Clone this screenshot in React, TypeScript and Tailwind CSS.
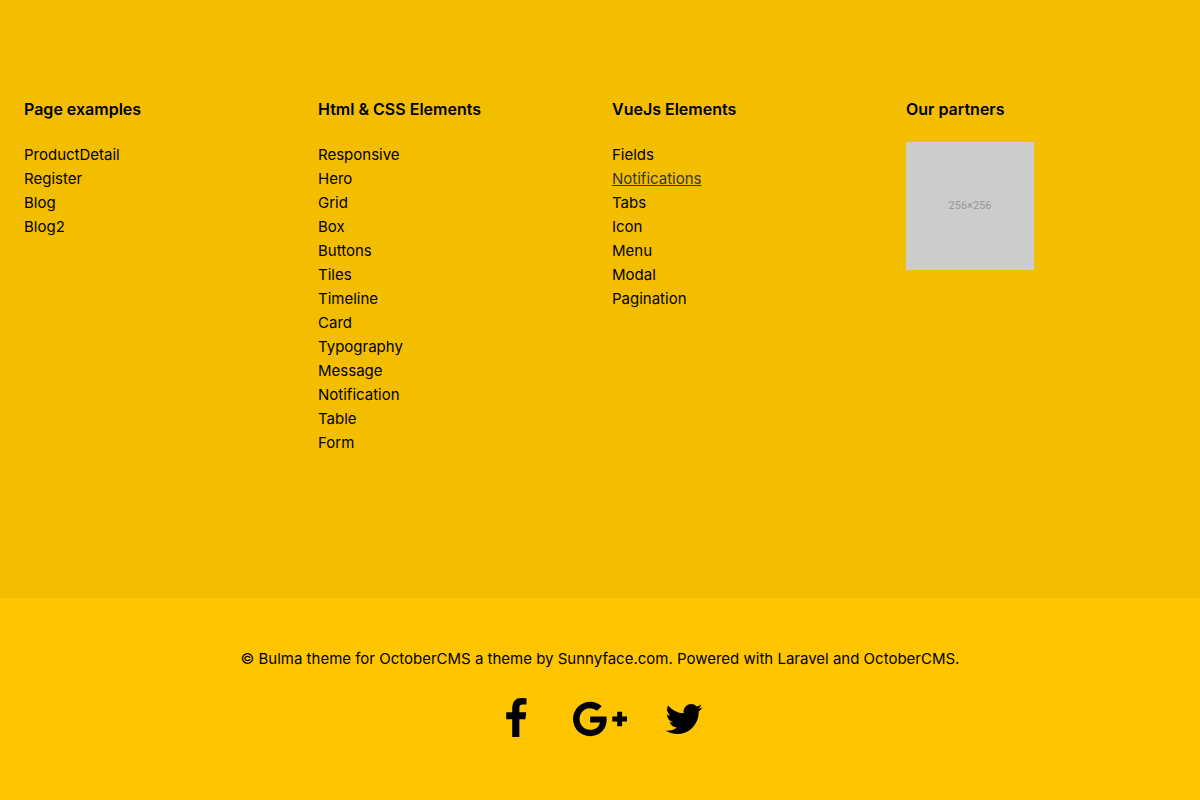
const columns = [
  { title: "Page examples", links: ["ProductDetail", "Register", "Blog", "Blog2"] },
  {
    title: "Html & CSS Elements",
    links: ["Responsive", "Hero", "Grid", "Box", "Buttons", "Tiles", "Timeline", "Card", "Typography", "Message", "Notification", "Table", "Form"],
  },
  { title: "VueJs Elements", links: ["Fields", "Notifications", "Tabs", "Icon", "Menu", "Modal", "Pagination"] },
];

const current = "Notifications";

const socials = [
  {
    name: "Facebook",
    viewBox: "0 0 1792 1792",
    d: "M1343 12v264h-157q-86 0-116 36t-30 108v189h293l-39 296h-254v759h-306v-759h-255v-296h255v-218q0-186 104-288.5t277-102.5q147 0 228 12z",
  },
  {
    name: "Google Plus",
    viewBox: "0 0 2304 1792",
    d: "M1437 913q0 208-87 370.5t-248 254-369 91.5q-149 0-285-58t-234-156-156-234-58-285 58-285 156-234 234-156 285-58q286 0 491 192l-199 191q-117-113-292-113-123 0-227.5 62t-165.5 168.5-61 232.5 61 232.5 165.5 168.5 227.5 62q83 0 152.5-23t114.5-57.5 78.5-78.5 49-83 21.5-74h-416v-252h692q12 63 12 122zm867-122v210h-209v209h-210v-209h-209v-210h209v-209h210v209h209z",
  },
  {
    name: "Twitter",
    viewBox: "0 0 1792 1792",
    d: "M1684 408q-67 98-162 167 1 14 1 42 0 130-38 259.5t-115.5 248.5-184.5 210.5-258 146-323 54.5q-271 0-496-145 35 4 78 4 225 0 401-138-105-2-188-64.5t-114-159.5q33 5 61 5 43 0 85-11-112-23-185.5-111.5t-73.5-205.5v-4q68 38 146 41-66-44-105-115t-39-154q0-88 44-163 121 149 294.5 238.5t371.5 99.5q-8-38-8-74 0-134 94.5-228.5t228.5-94.5q140 0 236 102 109-21 205-78-37 115-142 178 93-10 186-50z",
  },
];

function Heading({ children }: { children: string }) {
  return <h2 className="mb-[21px] text-base leading-6 font-semibold">{children}</h2>;
}

export default function App() {
  return (
    <div className="min-h-screen bg-[#ffc600] font-['Inter',sans-serif] text-[15px] leading-6 text-black">
      <section className="bg-[#f4be00] px-6 pt-[97px] pb-[143px]">
        <div className="grid grid-cols-4 gap-x-6">
          {columns.map((column) => (
            <nav key={column.title} aria-label={column.title}>
              <Heading>{column.title}</Heading>
              <ul className="pt-px">
                {column.links.map((link) => (
                  <li key={link}>
                    <a href="#" className={link === current ? "text-[#363636] underline" : "hover:underline"}>
                      {link}
                    </a>
                  </li>
                ))}
              </ul>
            </nav>
          ))}
          <div>
            <Heading>Our partners</Heading>
            <div className="flex size-32 items-center justify-center bg-[#cccccc] font-['Roboto',sans-serif] text-[11px] text-[#969696]">
              256×256
            </div>
          </div>
        </div>
      </section>
      <footer className="flex flex-col items-center px-6 pt-[49px] pb-12">
        <p className="text-center">
          © Bulma theme for OctoberCMS a theme by Sunnyface.com. Powered with Laravel and OctoberCMS.
        </p>
        <div className="mt-[27px] flex items-center gap-9">
          {socials.map((social) => (
            <a key={social.name} href="#" aria-label={social.name}>
              <svg viewBox={social.viewBox} className="h-[42px] w-auto" fill="currentColor" aria-hidden="true">
                <path d={social.d} />
              </svg>
            </a>
          ))}
        </div>
      </footer>
    </div>
  );
}
